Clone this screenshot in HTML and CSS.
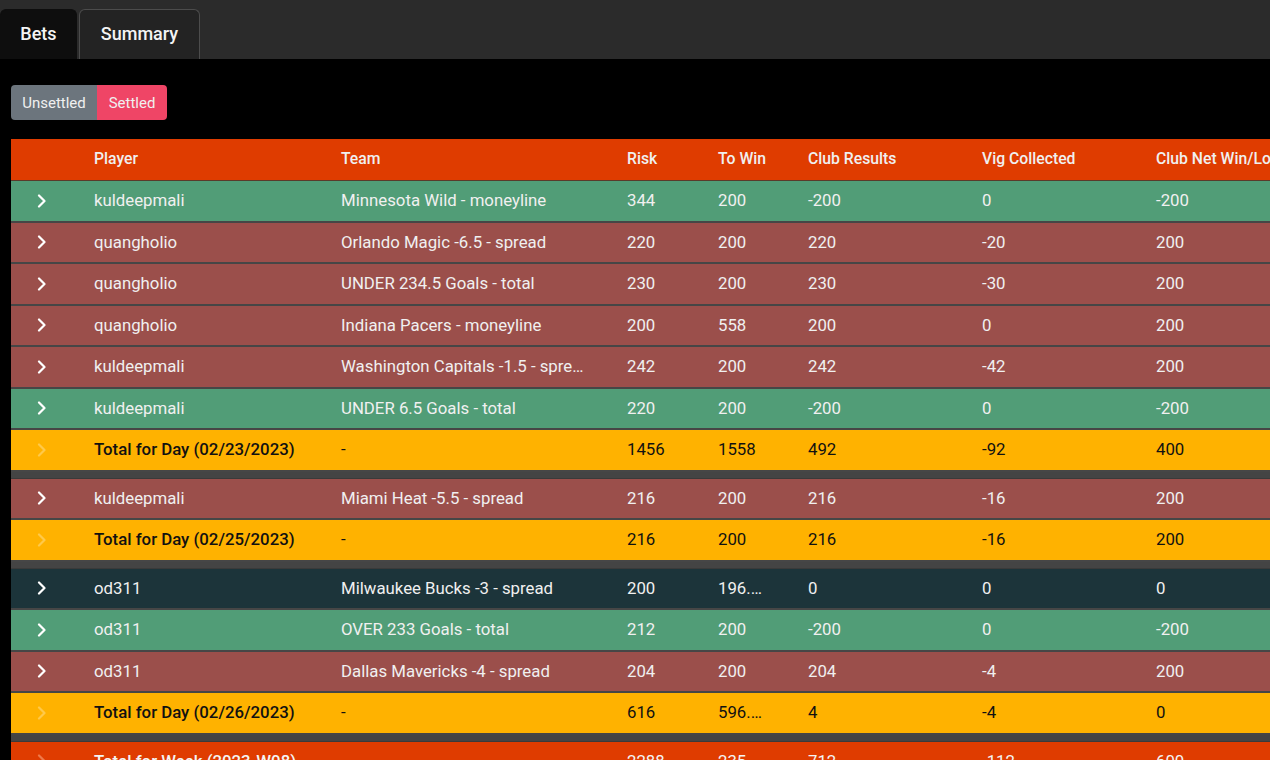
FILE: index.html
```html
<!DOCTYPE html>
<html>
<head>
<meta charset="utf-8">
<link rel="stylesheet" href="styles.css">
</head>
<body>
<div class="tabbar">
  <div class="tab active">Bets</div>
  <div class="tab">Summary</div>
</div>
<div class="content">
  <div class="toggle">
    <div class="tbtn unsettled">Unsettled</div>
    <div class="tbtn settled">Settled</div>
  </div>
  <div class="grid">
    <div class="row head">
      <div class="c"></div><div class="c">Player</div><div class="c">Team</div><div class="c">Risk</div><div class="c">To Win</div><div class="c">Club Results</div><div class="c">Vig Collected</div><div class="c">Club Net Win/Loss</div>
    </div>
    <div class="row green">
      <div class="c chev"><svg viewBox="0 0 10 14"><path d="M2 1.5 L7.5 7 L2 12.5"/></svg></div><div class="c">kuldeepmali</div><div class="c team">Minnesota Wild - moneyline</div><div class="c">344</div><div class="c win">200</div><div class="c">-200</div><div class="c">0</div><div class="c">-200</div>
    </div>
    <div class="row red">
      <div class="c chev"><svg viewBox="0 0 10 14"><path d="M2 1.5 L7.5 7 L2 12.5"/></svg></div><div class="c">quangholio</div><div class="c team">Orlando Magic -6.5 - spread</div><div class="c">220</div><div class="c win">200</div><div class="c">220</div><div class="c">-20</div><div class="c">200</div>
    </div>
    <div class="row red">
      <div class="c chev"><svg viewBox="0 0 10 14"><path d="M2 1.5 L7.5 7 L2 12.5"/></svg></div><div class="c">quangholio</div><div class="c team">UNDER 234.5 Goals - total</div><div class="c">230</div><div class="c win">200</div><div class="c">230</div><div class="c">-30</div><div class="c">200</div>
    </div>
    <div class="row red">
      <div class="c chev"><svg viewBox="0 0 10 14"><path d="M2 1.5 L7.5 7 L2 12.5"/></svg></div><div class="c">quangholio</div><div class="c team">Indiana Pacers - moneyline</div><div class="c">200</div><div class="c win">558</div><div class="c">200</div><div class="c">0</div><div class="c">200</div>
    </div>
    <div class="row red">
      <div class="c chev"><svg viewBox="0 0 10 14"><path d="M2 1.5 L7.5 7 L2 12.5"/></svg></div><div class="c">kuldeepmali</div><div class="c team">Washington Capitals -1.5 - spread</div><div class="c">242</div><div class="c win">200</div><div class="c">242</div><div class="c">-42</div><div class="c">200</div>
    </div>
    <div class="row green">
      <div class="c chev"><svg viewBox="0 0 10 14"><path d="M2 1.5 L7.5 7 L2 12.5"/></svg></div><div class="c">kuldeepmali</div><div class="c team">UNDER 6.5 Goals - total</div><div class="c">220</div><div class="c win">200</div><div class="c">-200</div><div class="c">0</div><div class="c">-200</div>
    </div>
    <div class="row total">
      <div class="c chev"><svg viewBox="0 0 10 14"><path d="M2 1.5 L7.5 7 L2 12.5"/></svg></div><div class="c label">Total for Day (02/23/2023)</div><div class="c team">-</div><div class="c">1456</div><div class="c win">1558</div><div class="c">492</div><div class="c">-92</div><div class="c">400</div>
    </div>
    <div class="gap"></div>
    <div class="row red">
      <div class="c chev"><svg viewBox="0 0 10 14"><path d="M2 1.5 L7.5 7 L2 12.5"/></svg></div><div class="c">kuldeepmali</div><div class="c team">Miami Heat -5.5 - spread</div><div class="c">216</div><div class="c win">200</div><div class="c">216</div><div class="c">-16</div><div class="c">200</div>
    </div>
    <div class="row total">
      <div class="c chev"><svg viewBox="0 0 10 14"><path d="M2 1.5 L7.5 7 L2 12.5"/></svg></div><div class="c label">Total for Day (02/25/2023)</div><div class="c team">-</div><div class="c">216</div><div class="c win">200</div><div class="c">216</div><div class="c">-16</div><div class="c">200</div>
    </div>
    <div class="gap"></div>
    <div class="row teal">
      <div class="c chev"><svg viewBox="0 0 10 14"><path d="M2 1.5 L7.5 7 L2 12.5"/></svg></div><div class="c">od311</div><div class="c team">Milwaukee Bucks -3 - spread</div><div class="c">200</div><div class="c win">196.67</div><div class="c">0</div><div class="c">0</div><div class="c">0</div>
    </div>
    <div class="row green">
      <div class="c chev"><svg viewBox="0 0 10 14"><path d="M2 1.5 L7.5 7 L2 12.5"/></svg></div><div class="c">od311</div><div class="c team">OVER 233 Goals - total</div><div class="c">212</div><div class="c win">200</div><div class="c">-200</div><div class="c">0</div><div class="c">-200</div>
    </div>
    <div class="row red">
      <div class="c chev"><svg viewBox="0 0 10 14"><path d="M2 1.5 L7.5 7 L2 12.5"/></svg></div><div class="c">od311</div><div class="c team">Dallas Mavericks -4 - spread</div><div class="c">204</div><div class="c win">200</div><div class="c">204</div><div class="c">-4</div><div class="c">200</div>
    </div>
    <div class="row total">
      <div class="c chev"><svg viewBox="0 0 10 14"><path d="M2 1.5 L7.5 7 L2 12.5"/></svg></div><div class="c label">Total for Day (02/26/2023)</div><div class="c team">-</div><div class="c">616</div><div class="c win">596.67</div><div class="c">4</div><div class="c">-4</div><div class="c">0</div>
    </div>
    <div class="gap"></div>
    <div class="row week">
      <div class="c chev"><svg viewBox="0 0 10 14"><path d="M2 1.5 L7.5 7 L2 12.5"/></svg></div><div class="c label">Total for Week (2023-W08)</div><div class="c team">-</div><div class="c">2288</div><div class="c win">235</div><div class="c">712</div><div class="c">-112</div><div class="c">600</div>
    </div>
  </div>
</div>
</body>
</html>
```

FILE: styles.css
```css
html, body {
  margin: 0;
  padding: 0;
  background: #000;
  overflow: hidden;
  height: 760px;
}
body {
  font-family: Roboto, "Liberation Sans", sans-serif;
  color: #f0f0f0;
}
.tabbar {
  height: 59px;
  background: #2b2b2b;
  display: flex;
  align-items: flex-end;
  gap: 2px;
  box-sizing: border-box;
}
.tab {
  height: 50px;
  box-sizing: border-box;
  display: flex;
  align-items: center;
  justify-content: center;
  font-size: 18px;
  font-weight: 500;
  color: #f4f4f4;
  border-radius: 6px 6px 0 0;
  background: #232323;
  border: 1px solid #4c4c4c;
  border-bottom: none;
  width: 121px;
  padding-bottom: 2px;
}
.tab.active {
  background: #0e0e0e;
  border-color: #0e0e0e;
  width: 77px;
}
.content {
  padding: 26px 0 0 11px;
}
.toggle {
  display: flex;
  height: 35px;
  margin-bottom: 19px;
}
.tbtn {
  display: flex;
  align-items: center;
  justify-content: center;
  font-size: 15px;
  color: #f0f0f0;
}
.unsettled {
  width: 86px;
  background: #6c757d;
  border-radius: 4px 0 0 4px;
}
.settled {
  width: 70px;
  background: #ef4566;
  border-radius: 0 4px 4px 0;
}
.grid {
  width: 1400px;
}
.row {
  display: grid;
  grid-template-columns: 72px 247px 286px 91px 90px 174px 174px 266px;
  height: 39.5px;
  line-height: 38.5px;
  border-bottom: 2px solid #464646;
  font-size: 16.8px;
}
.row.head {
  height: 41px;
  line-height: 39px;
  background: #df3c00;
  font-size: 15.75px;
  font-weight: 500;
  border-bottom: 1.5px solid #5a3a2a;
}
.c {
  display: block;
  padding-left: 11px;
  white-space: nowrap;
  overflow: hidden;
  text-overflow: ellipsis;
  min-width: 0;
}
.c.team {
  padding-right: 30px;
}
.c.win {
  padding-right: 34px;
}
.chev {
  display: flex;
  align-items: center;
  padding-left: 26px;
}
.chev svg {
  width: 10px;
  height: 14px;
  fill: none;
  stroke: #ffffff;
  stroke-width: 2.2;
  stroke-linecap: round;
  stroke-linejoin: round;
}
.green { background: #519d77; }
.red { background: #9b4f4b; }
.teal { background: #1c343a; }
.total {
  background: #ffb200;
  color: #111;
}
.total .label { font-weight: 500; }
.total .chev svg { stroke: #ffc94a; }
.week {
  background: #df3c00;
  color: #f4f4f4;
}
.week .label { font-weight: 500; }
.week .chev svg { stroke: #ef7a4a; }
.gap {
  height: 6px;
  background: #444444;
  border-bottom: 1.5px solid #3a3a3a;
}
```
